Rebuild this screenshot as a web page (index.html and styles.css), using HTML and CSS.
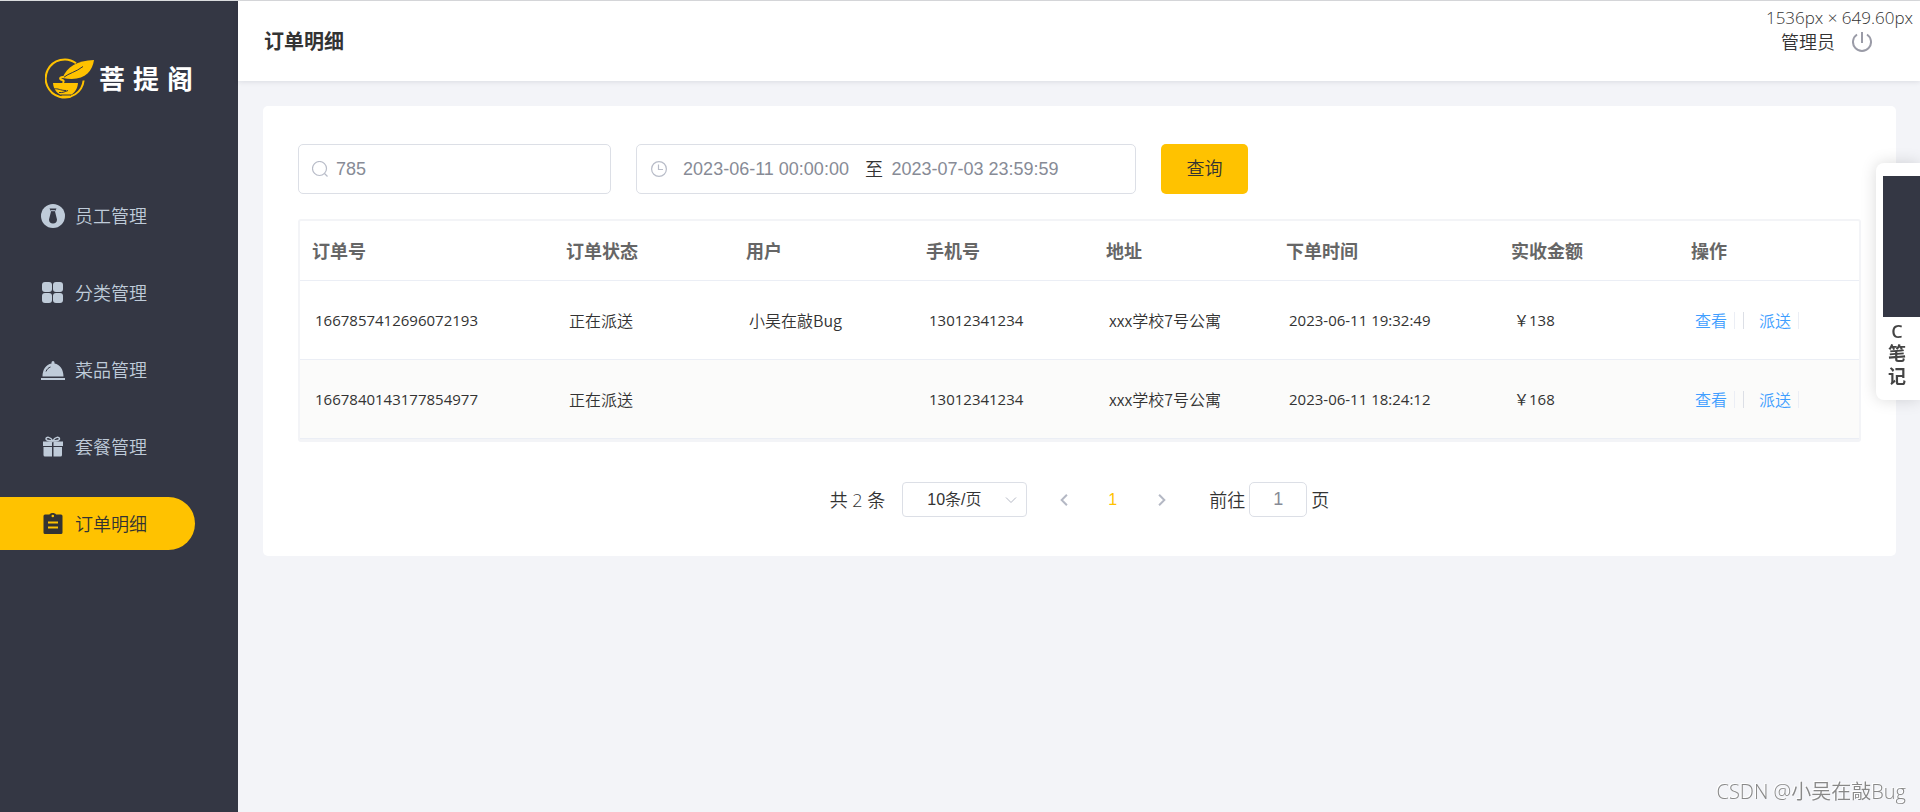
FILE: index.html
```html
<!DOCTYPE html>
<html lang="zh-CN">
<head>
<meta charset="utf-8">
<meta name="viewport" content="width=device-width, initial-scale=1">
<title>订单明细</title>
<link rel="stylesheet" href="styles.css">
</head>
<body>
<div class="app">
  <aside class="sidebar">
    <div class="logo">
      <svg class="logo-mark" viewBox="0 0 50 42" aria-hidden="true">
        <path d="M31 5.200A19 19 0 1 0 38.600 22.500" fill="none" stroke="#ffc200" stroke-width="2"/>
        <path d="M17.500 20C22 9 32 2.500 49 2C47 15 38 24 17.500 20Z" fill="#ffc200"/>
        <path d="M18.500 19.500C24 15 31 14 38 8.500" fill="none" stroke="#343744" stroke-width="1"/>
        <path d="M19 19C15.500 18.500 14 20.500 16 21.500C18.500 22.500 19.500 22.500 18 25" fill="none" stroke="#ffc200" stroke-width="2"/>
        <path d="M8 25H33C32.500 31 29.500 35 25.500 37V39.500H16.500V37C11.500 35 8.500 31 8 25Z" fill="#ffc200"/>
        <path d="M9 31C13 30 15 32.500 21 32.500M14 34.500C18 35 20 33.500 23 32.500M16 37H26" fill="none" stroke="#343744" stroke-width="1"/>
      </svg>
      <div class="logo-text"><span>菩</span><span>提</span><span>阁</span></div>
    </div>
    <nav class="menu">
      <a class="menu-item" href="#">
        <svg viewBox="0 0 24 24" aria-hidden="true"><circle cx="12" cy="12" r="12" fill="currentColor"/><path d="M8.500 4.500H15.500L14 7.500L16 15.500C16 18 14.500 19.500 12 19.500S8 18 8 15.500L10 7.500Z" fill="#343744"/><path d="M9.800 6.700H14.200" stroke="currentColor" stroke-width="1"/></svg>
        员工管理
      </a>
      <a class="menu-item" href="#">
        <svg viewBox="0 0 24 24" aria-hidden="true" fill="currentColor"><rect x="1" y="1" width="10" height="10" rx="3"/><rect x="12" y="1" width="10" height="10" rx="3"/><rect x="1" y="12" width="10" height="10" rx="3"/><rect x="12" y="12" width="10" height="10" rx="3"/></svg>
        分类管理
      </a>
      <a class="menu-item" href="#">
        <svg viewBox="0 0 24 24" aria-hidden="true"><path d="M1.500 18.500C1.500 11.500 5 6.500 10.500 5.500V4.500A1.500 1.500 0 0 1 13.500 4.500V5.500C19 6.500 22.500 11.500 22.500 18.500ZM0 20H24V22H0Z" fill="currentColor"/><path d="M5 13.500C6 11 7.500 9.700 9.500 9" fill="none" stroke="#343744" stroke-width="1"/></svg>
        菜品管理
      </a>
      <a class="menu-item" href="#">
        <svg viewBox="0 0 24 24" aria-hidden="true"><path d="M2 6.500H11V11H2ZM12.500 6.500H22V11H12.500ZM2.500 12H11V21.500H4A1.500 1.500 0 0 1 2.500 20ZM12.500 12H21V20A1.500 1.500 0 0 1 19.500 21.500H12.500Z" fill="currentColor"/><path d="M11.800 6C9 6 5.500 6 5 4C5 1.500 9.500 1.500 11.800 6C14 1.500 18.500 1.500 18.500 4C18 6 15 6 11.800 6Z" fill="none" stroke="currentColor" stroke-width="1.500"/></svg>
        套餐管理
      </a>
      <a class="menu-item active" href="#" aria-current="page">
        <svg viewBox="0 0 24 24" aria-hidden="true"><path d="M4 2.500H8.500C9.500 0.500 14 0.500 15 2.500H20A1.500 1.500 0 0 1 21.500 4V20.500A1.500 1.500 0 0 1 20 22H4A1.500 1.500 0 0 1 2.500 20.500V4A1.500 1.500 0 0 1 4 2.500Z" fill="currentColor"/><circle cx="11.800" cy="4" r="1.300" fill="#ffc200"/><path d="M7 10.500H17M7 15.500H17" stroke="#ffc200" stroke-width="2"/></svg>
        订单明细
      </a>
    </nav>
  </aside>

  <div class="main">
    <header class="header">
      <h1>订单明细</h1>
      <div class="user">
        <span>管理员</span>
        <button class="logout" type="button" aria-label="退出">
          <svg viewBox="0 0 20 20" aria-hidden="true"><path d="M5 2.500A9 9 0 1 0 15 2.500M10 0V11" fill="none" stroke="currentColor" stroke-width="2"/></svg>
        </button>
      </div>
    </header>

    <main class="card">
      <form class="filters">
        <label class="field search">
          <svg viewBox="0 0 16 16" aria-hidden="true"><circle cx="7.500" cy="7.500" r="7" /><path d="M12.500 12.500L15.500 15.500"/></svg>
          <input type="text" value="785" aria-label="订单号">
        </label>
        <div class="field range">
          <svg viewBox="0 0 16 16" aria-hidden="true"><circle cx="8" cy="8" r="7.400"/><path d="M7.500 3.500V8.500H12"/></svg>
          <input type="text" value="2023-06-11 00:00:00" aria-label="开始时间">
          <span>至</span>
          <input type="text" value="2023-07-03 23:59:59" aria-label="结束时间">
        </div>
        <button class="query" type="button">查询</button>
      </form>

      <table class="orders">
        <colgroup><col class="c-id"><col class="c-std"><col class="c-std"><col class="c-std"><col class="c-std"><col class="c-time"><col class="c-std"><col class="c-std"></colgroup>
        <thead>
          <tr><th>订单号</th><th>订单状态</th><th>用户</th><th>手机号</th><th>地址</th><th>下单时间</th><th>实收金额</th><th>操作</th></tr>
        </thead>
        <tbody>
          <tr>
            <td class="num">1667857412696072193</td><td>正在派送</td><td>小吴在敲Bug</td><td class="num">13012341234</td><td>xxx学校7号公寓</td><td class="num">2023-06-11 19:32:49</td><td class="num">￥138</td>
            <td><div class="actions"><button type="button">查看</button><button class="split" type="button">派送</button></div></td>
          </tr>
          <tr>
            <td class="num">1667840143177854977</td><td>正在派送</td><td></td><td class="num">13012341234</td><td>xxx学校7号公寓</td><td class="num">2023-06-11 18:24:12</td><td class="num">￥168</td>
            <td><div class="actions"><button type="button">查看</button><button class="split" type="button">派送</button></div></td>
          </tr>
        </tbody>
      </table>

      <div class="pagination">
        <span>共 2 条</span>
        <div class="page-size">
          <select aria-label="每页条数"><option>10条/页</option></select>
          <svg viewBox="0 0 12 12" aria-hidden="true"><path d="M1 3.500L6 8.500L11 3.500"/></svg>
        </div>
        <div class="pager">
          <button type="button" aria-label="上一页"><svg viewBox="0 0 12 12" aria-hidden="true"><path d="M8.500 1.500L4 6L8.500 10.500"/></svg></button>
          <button class="current" type="button">1</button>
          <button type="button" aria-label="下一页"><svg viewBox="0 0 12 12" aria-hidden="true"><path d="M3.500 1.500L8 6L3.500 10.500"/></svg></button>
        </div>
        <label class="jump">前往 <input type="text" value="1"> 页</label>
      </div>
    </main>
  </div>
</div>

<div class="viewport-size">1536px × 649.60px</div>
<div class="note-tab">
  <div class="note-thumb"></div>
  <span class="note-c">C</span><span>笔</span><span>记</span>
</div>
<div class="watermark">CSDN @小吴在敲Bug</div>
</body>
</html>
```
FILE: styles.css
```css
* {
  box-sizing: border-box;
}

body {
  margin: 0;
  font-family: "Open Sans", "Noto Sans CJK SC", sans-serif;
  font-size: 18px;
  font-weight: 350;
  line-height: 24px;
  color: #333;
  background: #f3f4f8;
}

button,
input,
select {
  margin: 0;
  padding: 0;
  border: 0;
  background: none;
  font: inherit;
  color: inherit;
}

.app {
  display: flex;
  min-height: 100vh;
  border-top: 1px solid #dadcde;
}

.sidebar {
  flex: none;
  width: 238px;
  background: #343744;
}

.logo {
  display: flex;
  align-items: center;
  gap: 4px;
  padding: 57px 0 0 45px;
}

.logo-mark {
  width: 50px;
  height: 42px;
}

.logo-text {
  display: flex;
  gap: 8px;
  font-size: 26px;
  font-weight: 700;
  color: #fff;
}

.menu {
  display: flex;
  flex-direction: column;
  gap: 24px;
  padding-top: 89px;
}

.menu-item {
  display: flex;
  align-items: center;
  gap: 10px;
  width: 195px;
  height: 53px;
  padding: 1px 0 0 41px;
  border-radius: 0 27px 27px 0;
  color: #bfcbd9;
  text-decoration: none;
}

.menu-item svg {
  width: 24px;
  height: 24px;
}

.menu-item.active {
  background: #ffc200;
  color: #333;
}

.main {
  flex: 1;
  min-width: 0;
}

.header {
  display: flex;
  align-items: center;
  justify-content: space-between;
  height: 80px;
  padding: 2px 48px 0 26px;
  background: #fff;
  box-shadow: 0 1px 5px rgba(0, 21, 41, 0.1);
}

.header h1 {
  margin: 0;
  font-size: 20px;
  font-weight: 700;
}

.user {
  display: flex;
  align-items: center;
  gap: 17px;
}

.logout {
  display: flex;
  color: #9a9ba7;
}

.logout svg {
  width: 20px;
  height: 20px;
}

.card {
  margin: 25px 24px 25px 25px;
  padding: 38px 35px;
  border-radius: 5px;
  background: #fff;
}

.filters {
  display: flex;
  gap: 25px;
}

.field {
  display: flex;
  align-items: center;
  height: 50px;
  padding: 0 13px 1px;
  border: 1px solid #dcdfe6;
  border-radius: 5px;
}

.field svg {
  flex: none;
  width: 16px;
  height: 16px;
  fill: none;
  stroke: #b8bcc8;
  stroke-width: 1.2;
}

.field input {
  min-width: 0;
  font: 400 18px/24px "Liberation Sans", sans-serif;
  color: #878b96;
}

.search {
  width: 313px;
  gap: 8px;
}

.search input {
  flex: 1;
}

.range {
  width: 500px;
  padding-left: 14px;
}

.range svg {
  margin-right: 12px;
}

.range input {
  width: 174px;
  text-align: center;
}

.range span {
  width: 35px;
  padding-left: 7px;
  text-align: center;
}

.query {
  width: 87px;
  height: 50px;
  padding-bottom: 2px;
  border-radius: 5px;
  background: #ffc200;
}

.orders {
  width: 100%;
  margin-top: 25px;
  border: 2px solid #f3f4f7;
  border-bottom-width: 3px;
  border-spacing: 0;
  border-radius: 3px;
  table-layout: fixed;
  text-align: left;
}

.c-id {
  width: 254px;
}

.c-std {
  width: 180px;
}

.c-time {
  width: 225px;
}

.orders th {
  height: 60px;
  padding: 0 12px;
  border-bottom: 1px solid #ebeef5;
  font-weight: 700;
  color: #666;
}

.orders td {
  height: 79px;
  padding: 0 14px 0 15px;
  border-bottom: 1px solid #ebeef5;
  font-family: "Noto Sans CJK SC", sans-serif;
  font-size: 16px;
}

.orders .num {
  font-family: "Open Sans", "Noto Sans CJK SC", sans-serif;
  font-size: 15px;
  font-weight: 400;
}

.orders tbody tr:nth-child(even) {
  background: #fbfbfa;
}

.actions {
  display: flex;
  align-items: center;
  gap: 8px;
}

.actions button {
  padding: 0 7px 0 1px;
  border-right: 1px solid #ebeef5;
  color: #409eff;
  line-height: 17px;
}

.actions .split {
  padding-left: 15px;
  border-left: 1px solid #dcdfe6;
}

.pagination {
  display: flex;
  align-items: center;
  justify-content: center;
  margin: 40px 0 1px;
}

.page-size {
  position: relative;
  margin-left: 17px;
}

.page-size select {
  display: block;
  width: 125px;
  height: 35px;
  padding-left: 24px;
  border: 1px solid #dcdfe6;
  border-radius: 4px;
  appearance: none;
  font-family: "Liberation Sans", "Noto Sans CJK SC", sans-serif;
  font-size: 16px;
}

.page-size svg {
  position: absolute;
  top: 12px;
  right: 10px;
  width: 12px;
  height: 12px;
  fill: none;
  stroke: #b4b8c4;
  pointer-events: none;
}

.pager {
  display: flex;
  gap: 12px;
  margin: 0 29px 0 18px;
}

.pager button {
  display: grid;
  place-items: center;
  width: 37px;
  height: 35px;
}

.pager svg {
  width: 14px;
  height: 14px;
  fill: none;
  stroke: #b4b8c4;
  stroke-width: 1.7;
}

.pager .current {
  font: 400 16px/24px "Liberation Sans", sans-serif;
  color: #ffc200;
}

.jump {
  display: flex;
  align-items: center;
  gap: 4px;
}

.jump input {
  width: 58px;
  height: 35px;
  border: 1px solid #dcdfe6;
  border-radius: 5px;
  font: 400 18px/24px "Liberation Sans", sans-serif;
  color: #878b96;
  text-align: center;
}

.viewport-size {
  position: absolute;
  top: 6px;
  right: 7px;
  font-size: 17px;
}

.note-tab {
  position: fixed;
  top: 163px;
  right: 0;
  display: flex;
  flex-direction: column;
  align-items: center;
  width: 44px;
  padding: 13px 0 12px 7px;
  border-radius: 8px 0 0 8px;
  background: #fff;
  box-shadow: 0 0 16px rgba(0, 0, 0, 0.15);
  font-weight: 700;
  line-height: 23px;
  color: #444;
}

.note-tab span {
  margin-right: 9px;
}

.note-tab .note-c {
  padding-top: 3px;
  font-weight: 600;
  line-height: 22px;
}

.note-thumb {
  width: 100%;
  height: 141px;
  background: #343744;
}

.watermark {
  position: fixed;
  right: 14px;
  bottom: 8px;
  font-size: 20px;
  color: #888;
  text-shadow: -1px -1px 0 #fff;
}
```
